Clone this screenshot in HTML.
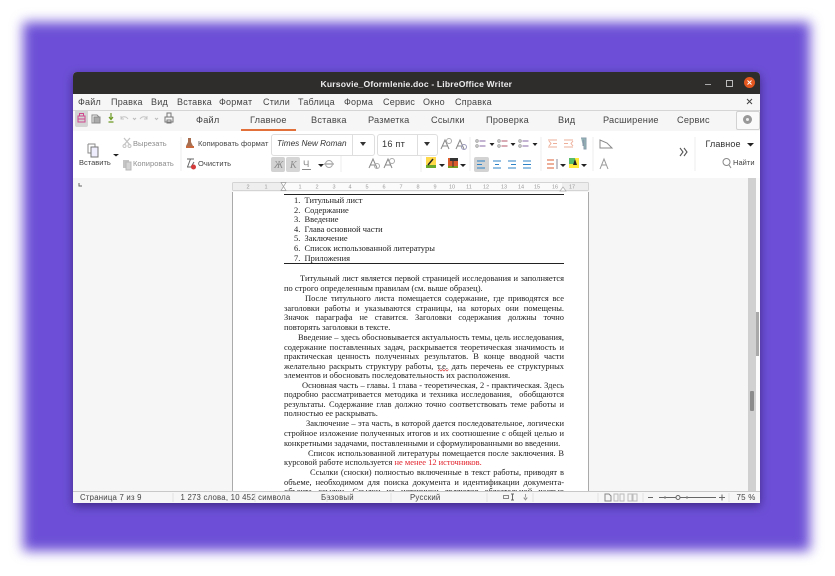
<!DOCTYPE html>
<html lang="ru"><head><meta charset="utf-8"><title>Kursovie_Oformlenie.doc - LibreOffice Writer</title>
<style>
html,body{margin:0;padding:0;background:#fff}
body{width:835px;height:576px;position:relative;overflow:hidden;font-family:"Liberation Sans",sans-serif;color:#444}
#bg{position:absolute;left:23px;top:22px;width:787px;height:529px;background:#6c4fd6;filter:blur(6px)}
#win{position:absolute;left:73px;top:72px;width:687px;height:431px;background:#f6f6f6;border-radius:4px 4px 0 0;box-shadow:0 3px 9px rgba(30,10,70,.55);overflow:hidden;filter:blur(.3px)}
#win *{position:absolute}
.t{white-space:nowrap;line-height:12px;font-size:9px;letter-spacing:.22px}
.s{font-size:7.5px;letter-spacing:.05px}
.g{color:#8c8c8c}
.l{position:absolute;left:211px;width:280px;font-family:"Liberation Serif",serif;font-size:8.45px;line-height:10px;color:#222;white-space:nowrap}
.j{white-space:normal;text-align:justify;text-align-last:justify;height:10px;overflow:hidden}
svg{overflow:visible}
</style></head><body>
<div id="bg"></div>
<div id="win">
<!-- title bar -->
<div style="left:0;top:0;width:687px;height:22px;background:#2f2c2c"></div>
<div class="t" style="left:247.500px;top:5.500px;color:#eee;font-weight:bold;font-size:8.600px;letter-spacing:.16px">Kursovie_Oformlenie.doc - LibreOffice Writer</div>
<div style="left:632px;top:12px;width:6px;height:1px;background:#aaa"></div>
<div style="left:653px;top:8px;width:5px;height:5px;border:1px solid #bbb"></div>
<div style="left:671px;top:5px;width:11px;height:11px;border-radius:50%;background:#e4571f"></div>
<svg style="left:671px;top:5px" width="11" height="11"><path d="M3.500 3.500l4 4M7.500 3.500l-4 4" stroke="#fff" stroke-width="1"/></svg>
<!-- menu -->
<div style="left:0;top:22px;width:687px;height:16px;background:#f6f6f6;border-bottom:1px solid #d5d5d5"></div>
<div class="t" style="left:5px;top:24px">Файл</div>
<div class="t" style="left:38px;top:24px">Правка</div>
<div class="t" style="left:78px;top:24px">Вид</div>
<div class="t" style="left:104px;top:24px">Вставка</div>
<div class="t" style="left:146px;top:24px">Формат</div>
<div class="t" style="left:190px;top:24px">Стили</div>
<div class="t" style="left:225px;top:24px">Таблица</div>
<div class="t" style="left:271px;top:24px">Форма</div>
<div class="t" style="left:310px;top:24px">Сервис</div>
<div class="t" style="left:350px;top:24px">Окно</div>
<div class="t" style="left:382px;top:24px">Справка</div>
<svg style="left:673px;top:26px" width="7" height="7"><path d="M1 1l5 5M6 1l-5 5" stroke="#444" stroke-width="1"/></svg>
<!-- tab row -->
<div style="left:0;top:39px;width:687px;height:20px;background:#f6f6f6;border-bottom:1px solid #d9d9d9"></div>
<div style="left:2px;top:38px;width:13px;height:17px;background:#d4d4d4;border-radius:2px"></div>
<svg style="left:3px;top:38px" width="100" height="18" fill="none">
<path d="M2 6h7v6H2zM3.500 6V3.500h4V6M2 9h7" stroke="#d0488e" stroke-width="1"/>
<path d="M16 5h5l2 2v6h-7z" stroke="#8a8a8a"/><path d="M18 7h6v6h-6z" fill="#aaa" stroke="#8a8a8a"/>
<path d="M35 3v6M33 7l2 2.500 2-2.500M32.500 12h5" stroke="#6b9a22" stroke-width="1.200"/>
<path d="M45 9c1-3 5-3 7 0M45 6v3h3" stroke="#c5c5c5"/><path d="M57 8l1.500 1.500L60 8" stroke="#bbb"/>
<path d="M71 9c-1-3-5-3-7 0M71 6v3h-3" stroke="#c5c5c5"/><path d="M79 8l1.500 1.500L82 8" stroke="#bbb"/>
<path d="M89 7h8v5h-8zM91 7V3h4v4M91 10h4v3h-4z" stroke="#777"/>
</svg>
<div class="t" style="left:123px;top:42px;font-size:9.200px">Файл</div>
<div class="t" style="left:177px;top:42px;font-size:9.200px">Главное</div>
<div class="t" style="left:238px;top:42px;font-size:9.200px">Вставка</div>
<div class="t" style="left:295px;top:42px;font-size:9.200px">Разметка</div>
<div class="t" style="left:358px;top:42px;font-size:9.200px">Ссылки</div>
<div class="t" style="left:413px;top:42px;font-size:9.200px">Проверка</div>
<div class="t" style="left:485px;top:42px;font-size:9.200px">Вид</div>
<div class="t" style="left:530px;top:42px;font-size:9.200px">Расширение</div>
<div class="t" style="left:604px;top:42px;font-size:9.200px">Сервис</div>
<div style="left:168px;top:57px;width:55px;height:2px;background:#e2703a"></div>
<div style="left:663px;top:39px;width:22px;height:17px;background:#fafafa;border:1px solid #d2d2d2;border-radius:2px"></div>
<div style="left:670px;top:43px;width:9px;height:9px;border-radius:50%;background:#999"></div>
<div style="left:673px;top:46px;width:3px;height:3px;border-radius:50%;background:#eee"></div>
<!-- toolbar -->
<div style="left:0;top:59px;width:687px;height:47px;background:#fff"></div>
<svg style="left:0;top:59px" width="687" height="47" fill="none">
<path d="M15 13h7v3M15 13v9h3" stroke="#888"/><path d="M18 16h7v10h-7z" fill="#eef" stroke="#777"/>
<path d="M40 23l3 2.500 3-2.500z" fill="#222"/>
<path d="M51 7l6 7M57 7l-6 7" stroke="#c4c4c4" stroke-width="1.300"/><circle cx="51.500" cy="15" r="1.500" stroke="#c4c4c4"/><circle cx="56.500" cy="15" r="1.500" stroke="#c4c4c4"/>
<path d="M50 29h6v8h-6z" fill="#c4c4c4"/><path d="M53 31h5v8h-5z" fill="#d4d4d4" stroke="#b8b8b8"/>
<path d="M115 7h3v4l2 4h-7l2-4z" fill="#a87050"/><path d="M113 15h8v2h-8z" fill="#c7693c"/>
<path d="M114 28h7M117.500 28l-3 8M114 36h4l3-5" stroke="#666"/><circle cx="120.500" cy="36" r="2.500" fill="#d53a3a"/>
<path d="M108 6v34M397 6v34M468 6v34M520 6v34M622 6v34" stroke="#ececec"/>
<path d="M268 24v17M348 24v17" stroke="#ececec"/>
<!-- bold italic underline strike -->
<rect x="198" y="26" width="14" height="15" rx="2" fill="#d2d2d2"/><rect x="213" y="26" width="14" height="15" rx="2" fill="#d6d6d6"/>
<path d="M245 33l3 3 3-3z" fill="#222"/>
<path d="M251 33h10" stroke="#888"/><circle cx="256" cy="33" r="3.500" stroke="#aaa"/>
<!-- grow / shrink -->
<path d="M368 18l4-9 4 9M369.500 15h5" stroke="#888"/><circle cx="376" cy="10" r="2.500" stroke="#aaa"/>
<path d="M383 18l4-9 4 9M384.500 15h5" stroke="#888"/><circle cx="391" cy="16" r="2.500" stroke="#99b"/>
<path d="M296 37l4-9 4 9M297.500 34h5" stroke="#888"/><circle cx="304" cy="35" r="2.500" stroke="#aaa"/>
<path d="M311 37l4-9 4 9M312.500 34h5" stroke="#888"/><circle cx="319" cy="30" r="2.500" stroke="#aaa"/>
<!-- highlight / font colour -->
<rect x="353" y="26" width="10" height="10" fill="#ffd94a"/><rect x="353" y="34" width="10" height="3" fill="#6aa82a"/><path d="M355 34l5-6" stroke="#222" stroke-width="1.500"/>
<path d="M366 33l3 3 3-3z" fill="#222"/>
<rect x="375" y="27" width="10" height="10" fill="#d85a2a"/><rect x="377" y="27" width="8" height="3" fill="#333"/><rect x="375" y="35" width="10" height="2" fill="#7a9a20"/><path d="M380 29v7" stroke="#333"/>
<path d="M387 33l3 3 3-3z" fill="#222"/>
<!-- lists -->
<g stroke="#8a6aa8"><path d="M406.500 10h6M406.500 15h6"/><path d="M428.500 10h6M428.500 15h6" stroke="#b0566a"/><path d="M449.500 10h6M449.500 15h6"/></g>
<g stroke="#999"><circle cx="404" cy="10" r="1.200"/><circle cx="404" cy="15" r="1.200"/><circle cx="426" cy="10" r="1.200"/><circle cx="426" cy="15" r="1.200"/><circle cx="447" cy="10" r="1.200"/><circle cx="447" cy="15" r="1.200"/></g>
<path d="M416.500 12l2.500 3 2.500-3zM437.500 12l2.500 3 2.500-3zM459.500 12l2.500 3 2.500-3z" fill="#222"/>
<!-- indents -->
<path d="M475 9h9M480 12.500h4M475 16h9M476 10l2 2.500-2 2.500" stroke="#eeaf9a"/>
<path d="M491 9h9M491 12.500h4M491 16h9M500 10l-2 2.500 2 2.500" stroke="#eeaf9a"/>
<path d="M508 7h5v11h-2V9h-1v6" fill="#9bb" stroke="#89a"/>
<!-- aligns -->
<rect x="401" y="26" width="15" height="15" rx="2" fill="#d3d3d3"/>
<path d="M404 30h8M404 33.500h5M404 37h8" stroke="#2d83c6"/>
<path d="M420 30h8M422 33.500h4M420 37h8" stroke="#2d83c6"/>
<path d="M435 30h8M438 33.500h5M435 37h8" stroke="#2d83c6"/>
<path d="M450 30h8M450 33.500h8M450 37h8" stroke="#2d83c6"/>
<!-- spacing + background -->
<path d="M474 29h7M474 33h7M474 37h7" stroke="#eeaf9a" stroke-width="2"/><path d="M484 28v10" stroke="#889"/>
<path d="M487 33l3 3 3-3z" fill="#222"/>
<rect x="496" y="27" width="10" height="10" fill="#ffe93a"/><rect x="496" y="27" width="6" height="6" fill="#57bd6a"/><path d="M500 34l2-6 2 6z" fill="#222"/>
<path d="M508 33l3 3 3-3z" fill="#222"/>
<path d="M527 9v8h12l-5-5z" stroke="#888" fill="none"/>
<path d="M527 38l4-10 4 10M528.500 34h5" stroke="#999"/>
<path d="M607 17l3 4-3 4M611 17l3 4-3 4" stroke="#555" stroke-width="1.100"/>
<path d="M674 12l3.500 3.500 3.500-3.500z" fill="#222"/>
<circle cx="653.500" cy="31" r="3.500" stroke="#888"/><path d="M656 34l2 3" stroke="#888"/>
</svg>
<div class="t s" style="left:6px;top:85px;letter-spacing:0">Вставить</div>
<div class="t g s" style="left:60px;top:65.500px">Вырезать</div>
<div class="t g s" style="left:60px;top:86px">Копировать</div>
<div class="t s" style="left:125px;top:65.500px">Копировать формат</div>
<div class="t s" style="left:125px;top:86px">Очистить</div>
<div style="left:198px;top:62px;width:102px;height:20px;background:#fff;border:1px solid #dedede;border-radius:3px"></div>
<div style="left:279px;top:63px;width:1px;height:20px;background:#dedede"></div>
<div class="t" style="left:204px;top:66px;font-style:italic;font-size:8.200px;letter-spacing:0;color:#333">Times New Roman</div>
<svg style="left:286px;top:70px" width="8" height="5"><path d="M1 0l3 4 3-4z" fill="#333"/></svg>
<div style="left:304px;top:62px;width:59px;height:20px;background:#fff;border:1px solid #dedede;border-radius:3px"></div>
<div style="left:344px;top:63px;width:1px;height:20px;background:#dedede"></div>
<div class="t" style="left:309px;top:66px;font-size:9.200px;color:#333">16 пт</div>
<svg style="left:350px;top:70px" width="8" height="5"><path d="M1 0l3 4 3-4z" fill="#333"/></svg>
<svg style="left:201px;top:86px" width="60" height="13"><text x="0" y="10" font-size="10" font-family="Liberation Serif" font-style="italic" fill="#888">Ж</text><text x="16" y="10" font-size="10" font-family="Liberation Serif" font-style="italic" fill="#888">К</text><text x="29" y="9" font-size="9.500" font-family="Liberation Sans" fill="#888">Ч</text><path d="M28 11.500h9" stroke="#888"/></svg>
<div class="t" style="left:632.500px;top:65.500px;font-size:9px;letter-spacing:.1px;color:#333">Главное</div>
<div class="t s" style="left:660px;top:85px">Найти</div>
<!-- ruler band -->
<div style="left:0;top:106px;width:675px;height:14px;background:#f6f6f6"></div>
<svg style="left:0;top:106px" width="687" height="14" fill="none">
<path d="M6 5v3h3" stroke="#666"/>
<rect x="159.500" y="4.500" width="356" height="8" rx="1" fill="#fbfbfb" stroke="#d4d4d4"/>
<rect x="160" y="5" width="50" height="7" fill="#eeeeee"/><rect x="489" y="5" width="26" height="7" fill="#eeeeee"/>
<path d="M208 4.500h5l-2.500 4 2.500 4h-5l2.500-4z" fill="#fff" stroke="#999" stroke-width=".7"/>
<path d="M487 13l3-4 3 4z" fill="#fff" stroke="#aaa" stroke-width=".7"/>
<g font-family="Liberation Sans" font-size="5.500" fill="#999" stroke="none" text-anchor="middle">
<text x="175" y="10.500">2</text><text x="193" y="10.500">1</text><text x="227" y="10.500">1</text><text x="244" y="10.500">2</text><text x="261" y="10.500">3</text><text x="277" y="10.500">4</text><text x="294" y="10.500">5</text><text x="311" y="10.500">6</text><text x="328" y="10.500">7</text><text x="345" y="10.500">8</text><text x="362" y="10.500">9</text><text x="379" y="10.500">10</text><text x="396" y="10.500">11</text><text x="413" y="10.500">12</text><text x="431" y="10.500">13</text><text x="448" y="10.500">14</text><text x="464" y="10.500">15</text><text x="482" y="10.500">16</text><text x="499" y="10.500">17</text></g>
</svg>
<!-- page -->
<div style="left:159px;top:120px;width:357px;height:300px;background:#fff;border-left:1px solid #aaa;border-right:1px solid #aaa;box-sizing:border-box"></div>
<!-- scrollbars -->
<div style="left:675px;top:106px;width:8px;height:314px;background:#d0d0d0"></div>
<div style="left:683px;top:106px;width:4px;height:314px;background:#fbfbfb"></div>
<div style="left:683px;top:240px;width:3px;height:44px;background:#a9a9a9"></div>
<div style="left:677px;top:319px;width:4px;height:20px;background:#8c8c8c;border-radius:1px"></div>
<!-- document -->
<div style="left:211px;top:122px;width:280px;height:1px;background:#222"></div>
<div class="l" style="top:123px;left:221px">1.&nbsp; Титульный лист</div>
<div class="l" style="top:132.600px;left:221px">2.&nbsp; Содержание</div>
<div class="l" style="top:142.200px;left:221px">3.&nbsp; Введение</div>
<div class="l" style="top:151.800px;left:221px">4.&nbsp; Глава основной части</div>
<div class="l" style="top:161.400px;left:221px">5.&nbsp; Заключение</div>
<div class="l" style="top:171px;left:221px">6.&nbsp; Список использованной литературы</div>
<div class="l" style="top:180.600px;left:221px">7.&nbsp; Приложения</div>
<div style="left:211px;top:191px;width:280px;height:1px;background:#222"></div>
<div class="l j" style="top:201px;left:227px;width:264px">Титульный лист является первой страницей исследования и заполняется</div>
<div class="l" style="top:211px">по строго определенным правилам (см. выше образец).</div>
<div class="l j" style="top:221px;left:232px;width:259px">После титульного листа помещается содержание, где приводятся все</div>
<div class="l j" style="top:230.500px">заголовки работы и указываются страницы, на которых они помещены.</div>
<div class="l j" style="top:240px">Значок параграфа не ставится. Заголовки содержания должны точно</div>
<div class="l" style="top:249.500px">повторять заголовки в тексте.</div>
<div class="l j" style="top:260px;left:225px;width:266px">Введение – здесь обосновывается актуальность темы, цель исследования,</div>
<div class="l j" style="top:269.500px">содержание поставленных задач, раскрывается теоретическая значимость и</div>
<div class="l j" style="top:279px">практическая ценность полученных результатов. В конце вводной части</div>
<div class="l j" style="top:288.700px">желательно раскрыть структуру работы, т.е. дать перечень ее структурных</div>
<div class="l" style="top:298.300px">элементов и обосновать последовательность их расположения.</div>
<svg style="left:365px;top:297px" width="12" height="3"><path d="M0 2l1.500-1.500L3 2l1.500-1.500L6 2l1.500-1.500L9 2l1.500-1.500" stroke="#e04040" stroke-width=".7" fill="none"/></svg>
<div class="l j" style="top:307.800px;left:229px;width:262px">Основная часть – главы. 1 глава - теоретическая, 2 - практическая. Здесь</div>
<div class="l j" style="top:317.300px">подробно рассматривается методика и техника исследования,&nbsp; обобщаются</div>
<div class="l j" style="top:326.800px">результаты. Содержание глав должно точно соответствовать теме работы и</div>
<div class="l" style="top:336.300px">полностью ее раскрывать.</div>
<div class="l j" style="top:346px;left:233px;width:258px">Заключение – эта часть, в которой дается последовательное, логически</div>
<div class="l j" style="top:355.700px">стройное изложение полученных итогов и их соотношение с общей целью и</div>
<div class="l" style="top:365.500px">конкретными задачами, поставленными и сформулированными во введении.</div>
<div class="l j" style="top:375.500px;left:235px;width:256px">Список использованной литературы помещается после заключения. В</div>
<div class="l" style="top:385px">курсовой работе используется <span style="position:static;color:#e0202a">не менее 12 источников.</span></div>
<div class="l j" style="top:395px;left:237px;width:254px">Ссылки (сноски) полностью включенные в текст работы, приводят в</div>
<div class="l j" style="top:404.500px">объеме, необходимом для поиска документа и идентификации документа-</div>
<div class="l j" style="top:414px">объекта ссылки. Ссылки на источники являются обязательной частью</div>
<!-- status bar -->
<div style="left:0;top:419px;width:687px;height:12px;background:#f6f6f6;border-top:1px solid #c8c8c8"></div>
<div class="t" style="left:7px;top:420px;font-size:7.800px;line-height:11px">Страница 7 из 9</div>
<div class="t" style="left:107.500px;top:420px;font-size:7.800px;line-height:11px">1 273 слова, 10 452 символа</div>
<div class="t" style="left:248px;top:420px;font-size:7.800px;line-height:11px">Базовый</div>
<div class="t" style="left:337px;top:420px;font-size:7.800px;line-height:11px">Русский</div>
<div class="t" style="left:663.500px;top:420px;font-size:8px;line-height:11px">75 %</div>
<svg style="left:0;top:419px" width="687" height="12" fill="none">
<path d="M100 2v9M182 2v9M254 2v9M318 2v9M414 2v9M525 2v9M570 2v9M656 2v9M460 2v9" stroke="#e2e2e2"/>
<rect x="430.500" y="4.500" width="5" height="3" stroke="#888"/><path d="M438 3h3M439.500 3v6M438 9h3" stroke="#666"/>
<path d="M452.500 3v3M451 7h3l-1.500 2z" stroke="#888" stroke-width=".8"/>
<path d="M532 3h4l2 2v5h-6z" stroke="#888"/><path d="M541 3h4v7h-4zM547 3h4v7h-4zM555 3h4v7h-4zM560 3h4v7h-4z" stroke="#bbb"/>
<path d="M575 6.500h5M646 6.500h6M649 3.500v6M586 6.500h57" stroke="#666"/>
<path d="M592 5v3M614 5v3" stroke="#888"/>
<circle cx="605" cy="6.500" r="2" fill="#f6f6f6" stroke="#666"/>
</svg>
</div>
</body></html>
